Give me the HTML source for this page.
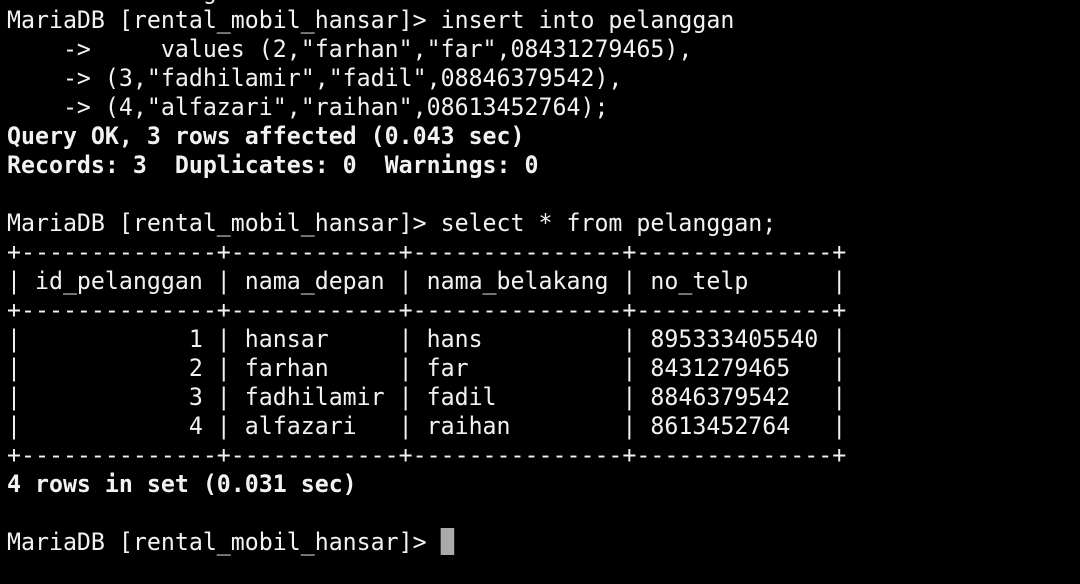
<!DOCTYPE html>
<html><head><meta charset="utf-8"><style>
html,body{margin:0;padding:0;background:#000;width:1080px;height:584px;overflow:hidden}
pre{position:absolute;left:7px;top:-23px;margin:0;font-family:"DejaVu Sans Mono","Liberation Mono",monospace;font-size:24px;line-height:29px;color:#f2f2f2;letter-spacing:-0.0px;transform:scaleX(0.968);transform-origin:0 0}
b{font-weight:bold}
.cur{display:inline-block;width:14px;height:27px;background:#aaa;vertical-align:-5px}
</style></head><body>
<pre>              g
MariaDB [rental_mobil_hansar]&gt; insert into pelanggan
    -&gt;     values (2,"farhan","far",08431279465),
    -&gt; (3,"fadhilamir","fadil",08846379542),
    -&gt; (4,"alfazari","raihan",08613452764);
<b>Query OK, 3 rows affected (0.043 sec)</b>
<b>Records: 3  Duplicates: 0  Warnings: 0</b>

MariaDB [rental_mobil_hansar]&gt; select * from pelanggan;
+--------------+------------+---------------+--------------+
| id_pelanggan | nama_depan | nama_belakang | no_telp      |
+--------------+------------+---------------+--------------+
|            1 | hansar     | hans          | 895333405540 |
|            2 | farhan     | far           | 8431279465   |
|            3 | fadhilamir | fadil         | 8846379542   |
|            4 | alfazari   | raihan        | 8613452764   |
+--------------+------------+---------------+--------------+
<b>4 rows in set (0.031 sec)</b>

MariaDB [rental_mobil_hansar]&gt; <span class="cur"></span></pre>
</body></html>
